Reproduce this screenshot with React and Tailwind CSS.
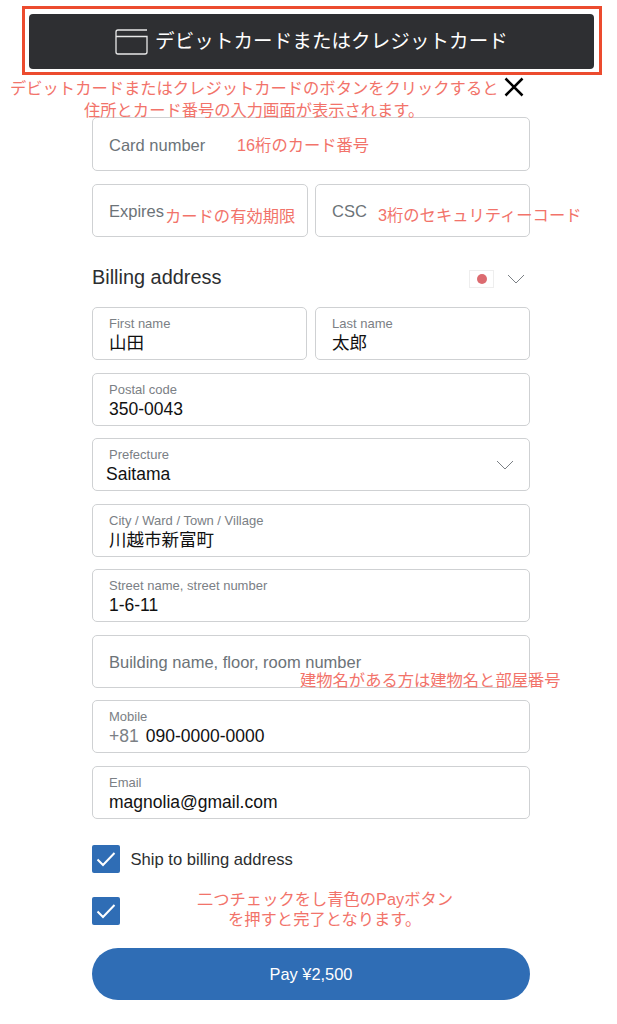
import React from 'react'

const jp = { fontFamily: '"Liberation Sans", "Noto Sans CJK JP", sans-serif' }

function Field({ label, value, className = '', valueClass = '', children }) {
  return (
    <div className={`relative h-[53px] rounded-[5px] border border-[#cfd1d3] bg-white pl-4 pt-[8px] ${className}`}>
      <p className="text-[13px] leading-[15px] text-[#7b8085]">{label}</p>
      <p className={`mt-[2px] text-[17.500px] leading-[21px] text-[#111] ${valueClass}`}>{value}</p>
      {children}
    </div>
  )
}

function Placeholder({ label, className = '' }) {
  return (
    <div className={`flex h-[53px] items-center rounded-[5px] border border-[#cfd1d3] bg-white pl-4 text-[16.500px] text-[#6c7378] ${className}`}>
      {label}
    </div>
  )
}

function Chevron({ className = '' }) {
  return (
    <svg width="18" height="10" viewBox="0 0 18 10" fill="none" stroke="#7b8085" strokeWidth="1" className={className}>
      <path d="M1 1l8 8 8-8" />
    </svg>
  )
}

function Check() {
  return (
    <div className="flex h-7 w-7 items-center justify-center rounded-[2px] bg-[#2f6db5]">
      <svg width="20" height="16" viewBox="0 0 20 16" fill="none" stroke="#fff" strokeWidth="2">
        <path d="M1.500 8.500l5.500 5.500L18.500 2" />
      </svg>
    </div>
  )
}

function Note({ className = '', children }) {
  return <div className={`absolute whitespace-nowrap text-[16.300px] leading-[19px] text-[#f2736a] ${className}`}>{children}</div>
}

export default function App() {
  return (
    <div className="relative h-[1024px] w-[617px] overflow-hidden bg-white" style={jp}>
      <div className="pl-[22px] pt-[6px]">
        <div className="w-[580px] border-[3px] border-[#ec4b2e] pb-[3px] pl-[4px] pr-[5px] pt-[5px]">
          <button className="flex h-[55px] w-full items-center justify-center gap-[7px] rounded-[4px] bg-[#2e2f32] text-[19.500px] tracking-[0.1px] text-white">
            <svg width="33" height="26" viewBox="0 0 33 26" fill="none" stroke="#e8e8e8" strokeWidth="1.300">
              <path d="M32 1H3a2 2 0 0 0-2 2v20a2 2 0 0 0 2 2h27a2 2 0 0 0 2-2V7.500H1" />
            </svg>
            デビットカードまたはクレジットカード
          </button>
        </div>
      </div>

      <div className="ml-[92px] mt-[42px] flex w-[438px] flex-col">
        <Placeholder label="Card number" className="h-[54px] pt-[2px]" />
        <div className="mt-[13px] flex gap-[7px]">
          <Placeholder label="Expires" className="w-[216px] pt-[1px]" />
          <Placeholder label="CSC" className="flex-1 pt-[1px]" />
        </div>

        <div className="mt-[26px] flex h-[30px] items-center justify-between pr-[5px]">
          <h2 className="text-[19.900px] text-[#2c2e2f]">Billing address</h2>
          <div className="flex items-center gap-[13px] pt-[1px]">
            <div className="flex h-[18px] w-[25px] items-center justify-center border border-[#eee] bg-white">
              <div className="h-[10px] w-[10px] rounded-full bg-[#dc6b70]" />
            </div>
            <Chevron />
          </div>
        </div>

        <div className="mt-[14px] flex flex-col gap-[12.500px]">
          <div className="flex gap-[8px]">
            <Field label="First name" value="山田" className="w-[215px]" />
            <Field label="Last name" value="太郎" className="flex-1" />
          </div>
          <Field label="Postal code" value="350-0043" />
          <Field label="Prefecture" value="Saitama" valueClass="-ml-[3px]">
            <Chevron className="absolute right-[15px] top-[21px]" />
          </Field>
          <Field label="City / Ward / Town / Village" value="川越市新富町" />
          <Field label="Street name, street number" value="1-6-11" />
          <Placeholder label="Building name, floor, room number" className="pt-[2px]" />
          <Field label="Mobile" value={<><span className="mr-[7px] text-[#7b8085]">+81</span>090-0000-0000</>} />
          <Field label="Email" value="magnolia@gmail.com" />
        </div>

        <div className="mt-[26px] flex items-center gap-[10.500px]">
          <Check />
          <span className="pt-[3px] text-[16.600px] text-[#2c2e2f]">Ship to billing address</span>
        </div>
        <div className="mt-[24px]">
          <Check />
        </div>
        <button className="mt-[23px] h-[52px] rounded-full bg-[#2f6db5] pt-[1px] text-[16.400px] text-white">Pay ¥2,500</button>
      </div>

      <Note className="left-[10px] top-[79px]">デビットカードまたはクレジットカードのボタンをクリックすると</Note>
      <Note className="left-[84px] top-[101px]">住所とカード番号の入力画面が表示されます。</Note>
      <svg width="20" height="20" viewBox="0 0 20 20" stroke="#000" strokeWidth="2.500" className="absolute left-[504px] top-[77px]">
        <path d="M1.500 1.500l17 17M18.500 1.500l-17 17" />
      </svg>
      <Note className="left-[237px] top-[136px]">16桁のカード番号</Note>
      <Note className="left-[165px] top-[207px]">カードの有効期限</Note>
      <Note className="left-[378px] top-[206px]">3桁のセキュリティーコード</Note>
      <Note className="left-[300px] top-[671px]">建物名がある方は建物名と部屋番号</Note>
      <Note className="left-[197px] top-[890px]">二つチェックをし青色のPayボタン</Note>
      <Note className="left-[228px] top-[910px]">を押すと完了となります。</Note>
    </div>
  )
}
